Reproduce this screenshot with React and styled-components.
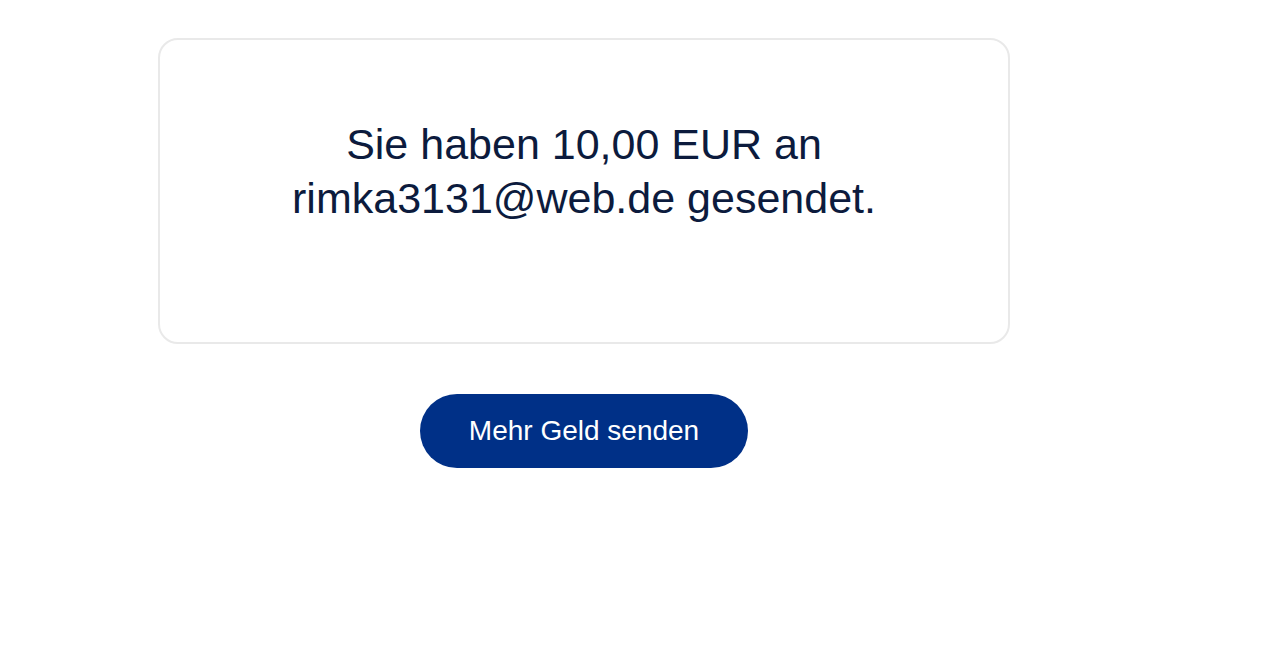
import React from 'react';
import styled, { createGlobalStyle } from 'styled-components';

const GlobalStyle = createGlobalStyle`
  html, body {
    margin: 0;
    padding: 0;
    background: #ffffff;
    font-family: 'Liberation Sans', Arial, sans-serif;
  }
`;

const Page = styled.div`
  width: 1280px;
  height: 665px;
  box-sizing: border-box;
  padding: 38px 0 0 158px;
`;

const Column = styled.div`
  width: 852px;
  display: flex;
  flex-direction: column;
  align-items: center;
  gap: 50px;
`;

const ConfirmCard = styled.div`
  width: 100%;
  height: 306px;
  box-sizing: border-box;
  border: 2px solid #e9e9e9;
  border-radius: 20px;
  padding: 77px 40px 0;
  display: flex;
  justify-content: center;
`;

const Message = styled.p`
  margin: 0;
  max-width: 620px;
  text-align: center;
  font-size: 43px;
  line-height: 54px;
  color: #0c1b3d;
`;

const PrimaryButton = styled.button`
  width: 328px;
  height: 74px;
  border: none;
  border-radius: 37px;
  background: #003087;
  color: #ffffff;
  font-family: 'Liberation Sans', Arial, sans-serif;
  font-size: 28px;
  cursor: pointer;
`;

export default function App() {
  return (
    <>
      <GlobalStyle />
      <Page>
        <Column>
          <ConfirmCard>
            <Message>
              Sie haben 10,00 EUR an
              <br />
              rimka3131@web.de gesendet.
            </Message>
          </ConfirmCard>
          <PrimaryButton>Mehr Geld senden</PrimaryButton>
        </Column>
      </Page>
    </>
  );
}
